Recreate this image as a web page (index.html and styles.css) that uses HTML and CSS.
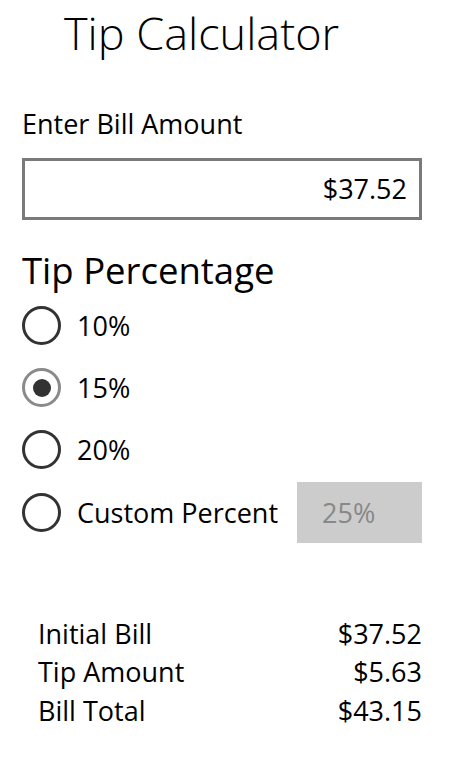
FILE: index.html
```html
<!DOCTYPE html>
<html>
  <head>
      <meta charset="utf-8">
      <title>Tip Calculator</title>
      <link rel="stylesheet" href="styles.css">
  </head>
  <body>
      <div id="app">
          <h1 class="title">Tip Calculator</h1>
          <div class="label">Enter Bill Amount</div>
          <div class="bill-box">$37.52</div>
          <h2 class="subtitle">Tip Percentage</h2>
          <ul class="options">
            <li><span class="radio"></span><span class="opt-text">10%</span></li>
            <li><span class="radio on"></span><span class="opt-text">15%</span></li>
            <li><span class="radio"></span><span class="opt-text">20%</span></li>
            <li>
              <span class="radio"></span><span class="opt-text">Custom Percent</span>
              <span class="custom">25%</span>
            </li>
          </ul>
          <div class="summary">
            <div class="row"><span>Initial Bill</span><span>$37.52</span></div>
            <div class="row"><span>Tip Amount</span><span>$5.63</span></div>
            <div class="row"><span>Bill Total</span><span>$43.15</span></div>
          </div>
      </div>
  </body>
</html>
```

FILE: styles.css
```css
*{
  margin:0;
  padding:0;
}
body{
  background:#fff;
  color:#000;
  font-family:"Open Sans","Noto Sans",sans-serif;
}
#app{
  width:400px;
  padding:0 50px 0 22px;
}
.title{
  font-size:45px;
  font-weight:300;
  line-height:66px;
  margin-left:42px;
}
.label{
  font-size:27px;
  line-height:34px;
  margin-top:41px;
}
.bill-box{
  margin-top:17px;
  height:56px;
  line-height:56px;
  border:3px solid #7a7a7a;
  text-align:right;
  padding-right:12px;
  font-size:27px;
}
.subtitle{
  font-size:36.5px;
  font-weight:400;
  line-height:44px;
  margin-top:28px;
}
.options{
  list-style:none;
  margin-top:2px;
}
.options li{
  display:flex;
  align-items:center;
  height:62.4px;
}
.radio{
  width:33px;
  height:33px;
  border:3px solid #333;
  border-radius:50%;
  margin-right:16px;
  position:relative;
  flex:none;
}
.radio.on{
  border-color:#8a8a8a;
}
.radio.on::after{
  content:"";
  position:absolute;
  left:7.5px;
  top:7.5px;
  width:18px;
  height:18px;
  border-radius:50%;
  background:#333;
}
.opt-text{
  font-size:27px;
}
.custom{
  margin-left:auto;
  width:100px;
  height:61px;
  line-height:61px;
  background:#ccc;
  color:#888;
  font-size:27px;
  padding-left:25px;
}
.summary{
  margin:71px 0 0 16px;
}
.row{
  display:flex;
  justify-content:space-between;
  font-size:27px;
  line-height:38.5px;
}
```
